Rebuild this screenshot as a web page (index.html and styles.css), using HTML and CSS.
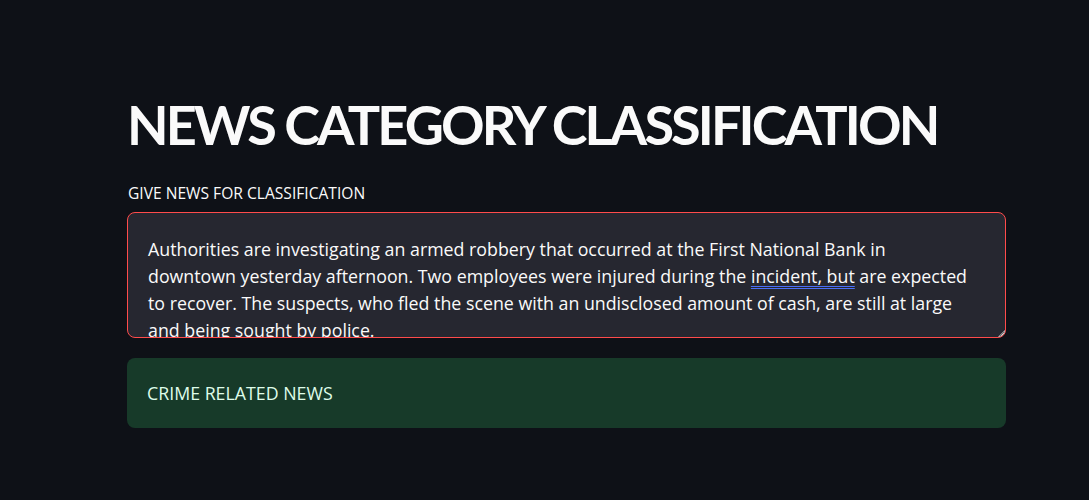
FILE: index.html
```html
<!DOCTYPE html>
<html lang="en">
<head>
<meta charset="utf-8">
<title>News Category Classification</title>
<link rel="stylesheet" href="styles.css">
</head>
<body>
<main class="main">
  <h1 class="title">NEWS CATEGORY CLASSIFICATION</h1>
  <label class="label">GIVE NEWS FOR CLASSIFICATION</label>
  <div class="textarea">
    <div class="text">
      <span class="line">Authorities are investigating an armed robbery that occurred at the First National Bank in</span>
      <span class="line">downtown yesterday afternoon. Two employees were injured during the <span class="grammar">incident, but</span> are expected</span>
      <span class="line">to recover. The suspects, who fled the scene with an undisclosed amount of cash, are still at large</span>
      <span class="line">and being sought by police.</span>
    </div>
    <svg class="resize" width="7" height="7" viewBox="0 0 7 7"><path d="M7 0 L7 7 L0 7 Z" fill="#d8d8d8"/><path d="M6 2 L2 6" stroke="#555" stroke-width="0.8"/></svg>
  </div>
  <div class="result">CRIME RELATED NEWS</div>
</main>
</body>
</html>
```
FILE: styles.css
```css
html, body {
  margin: 0;
  padding: 0;
  background: #0e1117;
}
body {
  font-family: "Source Sans Pro", "Open Sans", "Noto Sans", sans-serif;
  color: #fafafa;
}
.main {
  width: 879px;
  margin-left: 127px;
  padding-top: 94px;
  display: flex;
  flex-direction: column;
}
.title {
  margin: 0;
  font-family: "Source Sans Pro", "Lato", sans-serif;
  font-size: 54px;
  font-weight: 700;
  line-height: 62px;
  letter-spacing: -2.9px;
  color: #fafafa;
}
.label {
  margin-top: 27px;
  font-size: 15.6px;
  line-height: 20px;
  padding-left: 1px;
}
.textarea {
  position: relative;
  margin-top: 9px;
  height: 124px;
  border: 1px solid #ff4b4b;
  border-radius: 8px;
  background: #262730;
  overflow: hidden;
}
.text {
  padding: 22.5px 20px 0 20px;
  font-size: 17.8px;
  line-height: 27.3px;
  display: flex;
  flex-direction: column;
  white-space: nowrap;
}
.grammar {
  text-decoration: underline double #4a6ef5;
  text-decoration-thickness: 1px;
  text-underline-offset: 3px;
}
.resize {
  position: absolute;
  right: 0;
  bottom: 0;
}
.result {
  margin-top: 20px;
  height: 70px;
  box-sizing: border-box;
  padding: 0 20px;
  border-radius: 8px;
  background: #173a29;
  color: #dffde9;
  font-size: 17.8px;
  display: flex;
  align-items: center;
}
```
